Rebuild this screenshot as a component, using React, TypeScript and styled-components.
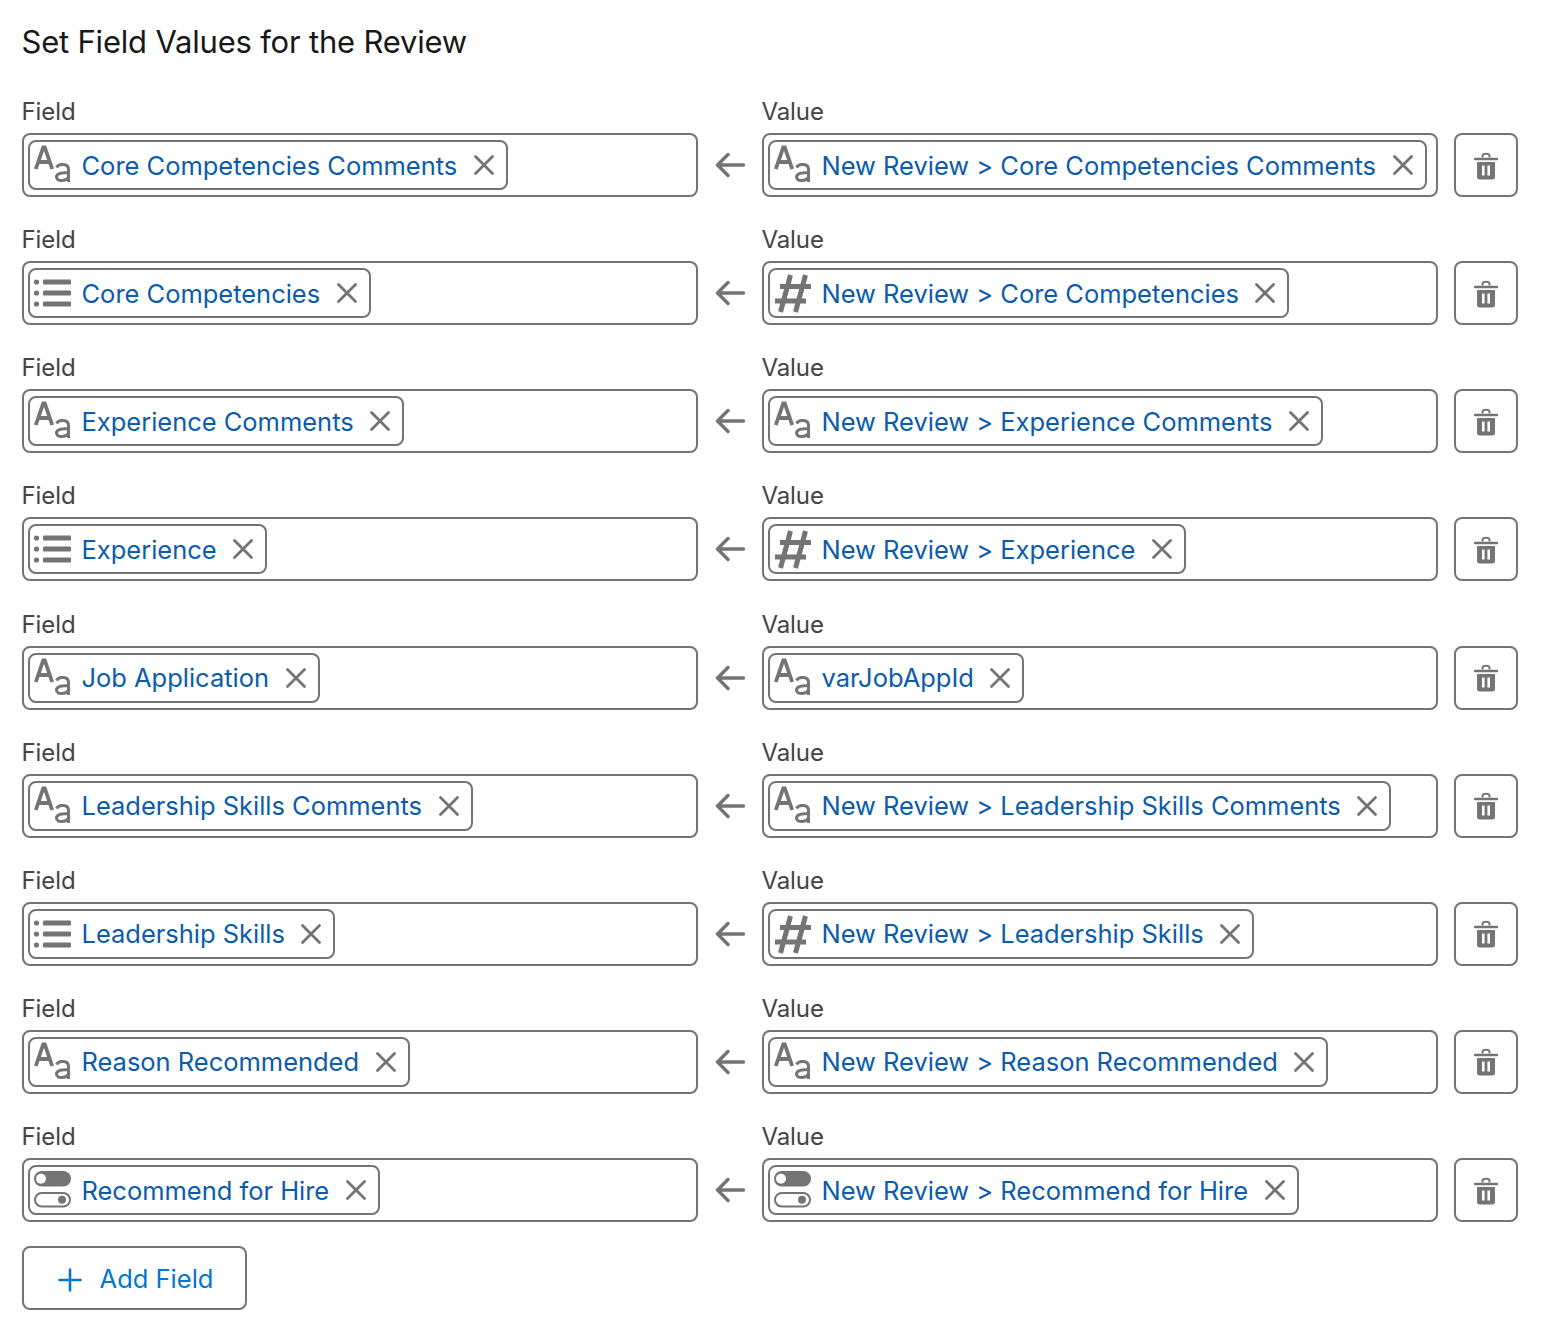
import React from "react";
import styled, { createGlobalStyle } from "styled-components";

type IconKind = "text" | "list" | "number" | "toggle";

interface Mapping {
  field: string;
  fieldIcon: IconKind;
  value: string;
  valueIcon: IconKind;
}

const MAPPINGS: Mapping[] = [
  { field: "Core Competencies Comments", fieldIcon: "text", value: "New Review > Core Competencies Comments", valueIcon: "text" },
  { field: "Core Competencies", fieldIcon: "list", value: "New Review > Core Competencies", valueIcon: "number" },
  { field: "Experience Comments", fieldIcon: "text", value: "New Review > Experience Comments", valueIcon: "text" },
  { field: "Experience", fieldIcon: "list", value: "New Review > Experience", valueIcon: "number" },
  { field: "Job Application", fieldIcon: "text", value: "varJobAppId", valueIcon: "text" },
  { field: "Leadership Skills Comments", fieldIcon: "text", value: "New Review > Leadership Skills Comments", valueIcon: "text" },
  { field: "Leadership Skills", fieldIcon: "list", value: "New Review > Leadership Skills", valueIcon: "number" },
  { field: "Reason Recommended", fieldIcon: "text", value: "New Review > Reason Recommended", valueIcon: "text" },
  { field: "Recommend for Hire", fieldIcon: "toggle", value: "New Review > Recommend for Hire", valueIcon: "toggle" },
];

const GREY = "#747474";

const TypeIcon: React.FC<{ kind: IconKind }> = ({ kind }) => {
  if (kind === "text") {
    return (
      <svg width="40" height="44" viewBox="0 0 40 44" fill="none" stroke={GREY}>
        <path d="M2.8 26 L10.2 4.5 H11.8 L19.2 26 M5.5 19 H16.5" strokeWidth="3.8" />
        <path d="M23.5 24.5 C25.5 20.5 35.5 20 35.5 26.5 V39 M35.5 29.5 C28 29.5 23.5 30.5 23.5 34 C23.5 39 33 38.5 35.5 34" strokeWidth="3" />
      </svg>
    );
  }
  if (kind === "list") {
    return (
      <svg width="40" height="44" viewBox="0 0 40 44" fill={GREY}>
        <circle cx="3.5" cy="11" r="2.6" />
        <circle cx="3.5" cy="22" r="2.6" />
        <circle cx="3.5" cy="33" r="2.6" />
        <rect x="10" y="8.5" width="28" height="5" rx="1.2" />
        <rect x="10" y="19.5" width="28" height="5" rx="1.2" />
        <rect x="10" y="30.5" width="28" height="5" rx="1.2" />
      </svg>
    );
  }
  if (kind === "number") {
    return (
      <svg width="40" height="44" viewBox="0 0 40 44" fill="none" stroke={GREY} strokeWidth="5">
        <path d="M17.5 4 L7.5 41 M32.5 4 L22.5 41 M7 15.5 H38 M2 30 H33" />
      </svg>
    );
  }
  return (
    <svg width="40" height="44" viewBox="0 0 40 44" fill="none">
      <rect x="1" y="3" width="37" height="15.5" rx="7.75" fill={GREY} />
      <circle cx="8" cy="10.7" r="5" fill="#fff" />
      <rect x="2" y="25" width="35" height="13.5" rx="6.75" stroke={GREY} strokeWidth="2" />
      <circle cx="29" cy="31.7" r="4" fill={GREY} />
    </svg>
  );
};

const CloseIcon = () => (
  <svg width="20" height="20" viewBox="0 0 20 20" fill="none" stroke={GREY} strokeWidth="2.8" strokeLinecap="round">
    <path d="M1.5 1.5 L18.5 18.5 M18.5 1.5 L1.5 18.5" />
  </svg>
);

const ArrowIcon = () => (
  <svg width="30" height="26" viewBox="0 0 30 26" fill="none" stroke={GREY} strokeWidth="3.4" strokeLinecap="round" strokeLinejoin="round">
    <path d="M28.5 13 H2.5 M13 2.5 L2.5 13 L13 23.5" />
  </svg>
);

const TrashIcon = () => (
  <svg width="24" height="28" viewBox="0 0 24 28" fill="none">
    <path d="M8.5 5.5 V3.8 C8.5 1 15.5 1 15.5 3.8 V5.5" stroke={GREY} strokeWidth="2" />
    <path d="M1 7 H23" stroke={GREY} strokeWidth="2.4" strokeLinecap="round" />
    <path
      fillRule="evenodd"
      d="M3 10 H21 V25 C21 26.5 20 27.5 18.5 27.5 H5.5 C4 27.5 3 26.5 3 25 Z M8 13.5 V23.5 H10.6 V13.5 Z M13.4 13.5 V23.5 H16 V13.5 Z"
      fill={GREY}
    />
  </svg>
);

const PlusIcon = () => (
  <PlusSvg width="24" height="24" viewBox="0 0 24 24" fill="none" stroke="#0176d3" strokeWidth="2.6" strokeLinecap="round">
    <path d="M12 1.5 V22.5 M1.5 12 H22.5" />
  </PlusSvg>
);

const Pill: React.FC<{ icon: IconKind; label: string }> = ({ icon, label }) => (
  <PillBox>
    <TypeIcon kind={icon} />
    <PillLabel>{label}</PillLabel>
    <PillClose type="button" aria-label={`Remove ${label}`}>
      <CloseIcon />
    </PillClose>
  </PillBox>
);

const App: React.FC = () => (
  <Page>
    <GlobalStyle />
    <Title>Set Field Values for the Review</Title>
    {MAPPINGS.map((m) => (
      <Row key={m.field}>
        <div>
          <Label>Field</Label>
          <InputBox>
            <Pill icon={m.fieldIcon} label={m.field} />
          </InputBox>
        </div>
        <ArrowCell>
          <ArrowIcon />
        </ArrowCell>
        <div>
          <Label>Value</Label>
          <InputBox>
            <Pill icon={m.valueIcon} label={m.value} />
          </InputBox>
        </div>
        <DeleteButton type="button" aria-label="Delete">
          <TrashIcon />
        </DeleteButton>
      </Row>
    ))}
    <AddButton type="button">
      <PlusIcon />
      Add Field
    </AddButton>
  </Page>
);

const GlobalStyle = createGlobalStyle`
  body {
    margin: 0;
    background: #fff;
    font-family: Inter, "Liberation Sans", Arial, sans-serif;
  }
`;

const Page = styled.div`
  padding: 0 24px 0 22px;
`;

const Title = styled.h2`
  margin: 0 0 0 -0.5px;
  padding-top: 21px;
  height: 96px;
  box-sizing: border-box;
  font-size: 31px;
  line-height: 42px;
  font-weight: 400;
  letter-spacing: -0.2px;
  color: #181818;
`;

const Row = styled.div`
  display: grid;
  grid-template-columns: 676px 64px 676px 64px;
  column-gap: 0;
  height: 128.125px;
  align-items: start;

  & > button {
    margin-left: 16px;
  }
`;

const Label = styled.div`
  height: 37px;
  margin-left: -0.5px;
  font-size: 24px;
  line-height: 32px;
  letter-spacing: -0.1px;
  color: #444;
`;

const InputBox = styled.div`
  box-sizing: border-box;
  height: 64px;
  padding: 6px 4px;
  border: 2px solid ${GREY};
  border-radius: 8px;
  display: flex;
  align-items: center;
  background: #fff;
`;

const PillBox = styled.div`
  box-sizing: border-box;
  height: 50px;
  display: inline-flex;
  align-items: center;
  padding: 0 12px 0 3px;
  border: 2px solid ${GREY};
  border-radius: 8px;
  white-space: nowrap;
`;

const PillLabel = styled.span`
  margin-left: 8.5px;
  font-size: 25.5px;
  letter-spacing: -0.02px;
  color: #0b5cab;
`;

const PillClose = styled.button`
  margin-left: 16.5px;
  padding: 0;
  display: flex;
  border: 0;
  background: none;
`;

const ArrowCell = styled.div`
  height: 64px;
  margin-top: 37px;
  display: flex;
  align-items: center;
  justify-content: center;
`;

const DeleteButton = styled.button`
  box-sizing: border-box;
  width: 64px;
  height: 64px;
  margin-top: 37px;
  padding: 1px 0 0;
  display: flex;
  align-items: center;
  justify-content: center;
  border: 2px solid ${GREY};
  border-radius: 8px;
  background: #fff;
`;

const AddButton = styled.button`
  box-sizing: border-box;
  width: 225px;
  height: 64px;
  margin-top: -3px;
  display: flex;
  align-items: center;
  justify-content: center;
  gap: 18px;
  padding: 0 0 0 2px;
  border: 2px solid ${GREY};
  border-radius: 8px;
  background: #fff;
  font-family: inherit;
  font-size: 25.5px;
  color: #0176d3;
`;

const PlusSvg = styled.svg`
  transform: translateY(2px);
`;

export default App;
